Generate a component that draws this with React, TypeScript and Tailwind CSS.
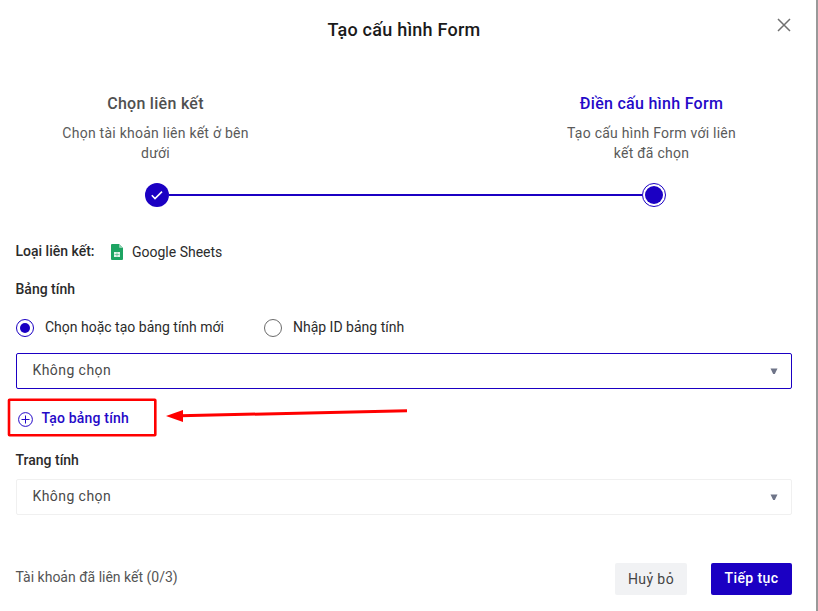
import type { ReactNode } from "react";

function StepLabel({ title, lines, active }: { title: string; lines: string[]; active?: boolean }) {
  return (
    <div className="w-[220px] text-center">
      <div className={`mt-px h-[22px] text-[16px] font-medium leading-[22px] tracking-[0.28px] ${active ? "text-[#2409c8]" : "text-[#505050]"}`}>
        {title}
      </div>
      <div className="mt-2 text-[14px] leading-5 tracking-[0.25px] text-[#5a5a5a]">
        {lines.map((line) => (
          <div key={line}>{line}</div>
        ))}
      </div>
    </div>
  );
}

function Select({ active }: { active?: boolean }) {
  return (
    <div className={`flex h-9 items-center justify-between rounded-[2px] border pl-[15.5px] pr-[14px] text-[14px] text-[#4a4a4a] ${active ? "border-[#1b00c3]" : "border-[#f0f0f0]"}`}>
      <span className="-mt-0.5 tracking-[0.43px]">Không chọn</span>
      <svg className="-mr-px -mt-px" width="8" height="6" viewBox="0 0 8 6">
        <path d="M0.5 0.5h7L4.8 6H3.2z" fill="#6e7488" />
      </svg>
    </div>
  );
}

function Radio({ checked, children }: { checked?: boolean; children: ReactNode }) {
  return (
    <div className="flex items-center gap-[11px]">
      <span className={`flex size-[18px] items-center justify-center rounded-full border ${checked ? "border-[#1b00c3]" : "border-[#6b6b6b]"}`}>
        {checked && <span className="size-[10px] rounded-full bg-[#1b00c3]" />}
      </span>
      <span className="-mt-0.5">{children}</span>
    </div>
  );
}

export default function App() {
  return (
    <div className="relative h-[611px] w-[818px] overflow-hidden border-r-2 border-[#999999] bg-white pl-4 pr-6 font-['Roboto','Liberation_Sans',sans-serif] text-[14px] text-[#2b2b2b]">
      <header className="flex h-[92px] justify-between">
        <div className="w-[15px]" />
        <h1 className="mt-[18px] text-[18px] font-medium leading-6 tracking-[0.24px] text-[#1a1a1a]">Tạo cấu hình Form</h1>
        <svg className="mt-[18px]" width="15" height="14" viewBox="0 0 15 14">
          <path d="M1 1l12 12M13 1L1 13" stroke="#707070" strokeWidth="1.5" fill="none" />
        </svg>
      </header>

      <div className="flex h-[91px] justify-between pl-[29.5px] pr-[30.5px]">
        <StepLabel title="Chọn liên kết" lines={["Chọn tài khoản liên kết ở bên", "dưới"]} />
        <StepLabel title="Điền cấu hình Form" lines={["Tạo cấu hình Form với liên", "kết đã chọn"]} active />
      </div>

      <div className="flex h-6 items-center pl-[129px] pr-[126px]">
        <span className="flex size-6 items-center justify-center rounded-full bg-[#1b00c3]">
          <svg width="14" height="12" viewBox="0 0 14 12">
            <path d="M1.8 6.3l3.2 3.2L12 2.6" stroke="#fff" strokeWidth="1.6" fill="none" />
          </svg>
        </span>
        <span className="h-0.5 flex-1 bg-[#1b00c3]" />
        <span className="flex size-6 items-center justify-center rounded-full border-[1.5px] border-[#1b00c3]">
          <span className="size-[18px] rounded-full bg-[#1b00c3]" />
        </span>
      </div>

      <div className="mt-[34px] flex h-5 items-center leading-5">
        <span className="-ml-[0.5px] w-[95px] font-medium">Loại liên kết:</span>
        <svg className="mt-[2px]" width="12" height="16" viewBox="0 0 12 16">
          <path d="M1 0h7l4 4v11q0 1-1 1H1q-1 0-1-1V1q0-1 1-1z" fill="#1da462" />
          <path d="M8 0l4 4H9Q8 4 8 3z" fill="#8ed1b1" />
          <path d="M3 8h6v5H3z" fill="#e4f3ea" />
          <path d="M3.5 10.5h5M6 8.5v4" stroke="#1da462" strokeWidth=".5" />
        </svg>
        <span className="ml-[9.5px] mt-0.5">Google Sheets</span>
      </div>

      <div className="-ml-[0.5px] mt-[18px] h-5 font-medium leading-5">Bảng tính</div>

      <div className="mt-[19px] flex h-5 items-center gap-10">
        <Radio checked>Chọn hoặc tạo bảng tính mới</Radio>
        <Radio>Nhập ID bảng tính</Radio>
      </div>

      <div className="mt-[15px]">
        <Select active />
      </div>

      <div className="mt-[19px] flex h-5 items-center gap-[9px] pl-[1.5px] font-medium leading-5 tracking-[0.18px] text-[#2409c8]">
        <svg className="mt-0.5" width="15" height="15" viewBox="0 0 15 15" fill="none" stroke="#2409c8">
          <circle cx="7.5" cy="7.5" r="6.9" />
          <path d="M3.5 7.5h8M7.5 3.5v8" />
        </svg>
        <span>Tạo bảng tính</span>
      </div>

      <div className="-ml-[0.5px] mt-[22px] h-5 font-medium leading-5">Trang tính</div>
      <div className="mt-[9px]">
        <Select />
      </div>

      <footer className="mt-12 flex h-8 items-center">
        <span className="-ml-[0.5px] -mt-1 flex-1 text-[#555555]">Tài khoản đã liên kết (0/3)</span>
        <button className="h-8 w-[72px] rounded-[2px] bg-[#f1f2f4] tracking-[0.4px] text-[#444444]">Huỷ bỏ</button>
        <button className="ml-6 h-8 w-[81px] rounded-[2px] bg-[#1b00c3] pb-0.5 font-medium tracking-[0.4px] text-white">Tiếp tục</button>
      </footer>

      <svg className="absolute left-0 top-[390px]" width="420" height="55" viewBox="0 390 420 55">
        <rect x="9" y="399.8" width="146.3" height="35.4" rx="0.5" fill="none" stroke="#ff0000" strokeWidth="2.6" />
        <path d="M180 415.8L407 410.7" stroke="#ff0000" strokeWidth="3" />
        <path d="M166 416l17-6v12z" fill="#ff0000" />
      </svg>
    </div>
  );
}
